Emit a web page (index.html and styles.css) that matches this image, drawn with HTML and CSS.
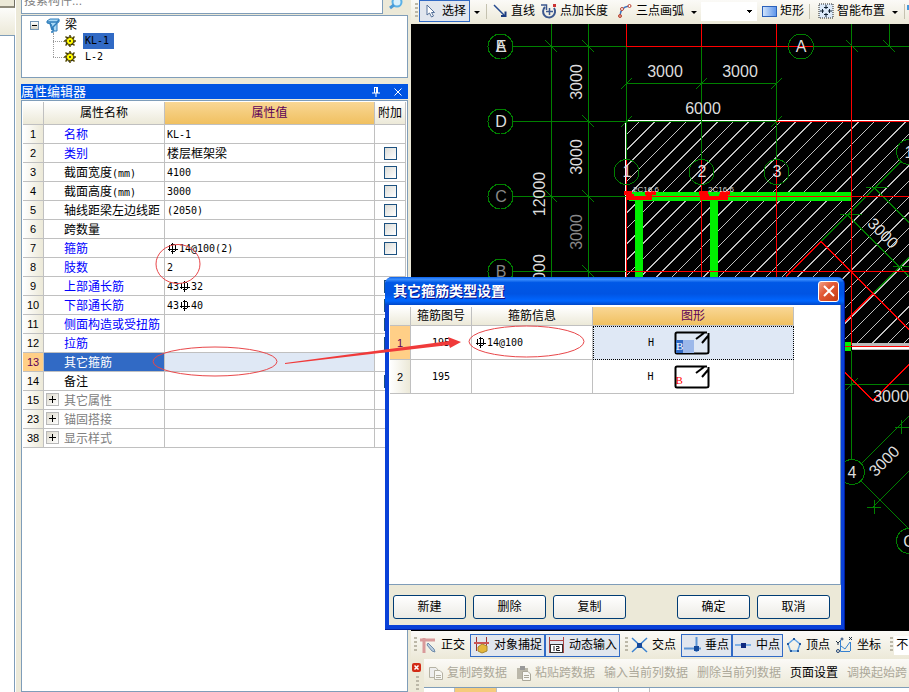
FILE: index.html
```html
<!DOCTYPE html>
<html lang="zh-CN">
<head>
<meta charset="utf-8">
<title>属性编辑器</title>
<link rel="stylesheet" href="styles.css">
</head>
<body>
<svg width="0" height="0" class="defs" aria-hidden="true">
  <symbol id="rebar" viewBox="0 0 12 11"><path d="M5.500 0V11M1 6.500H11M3.500 1.500H8M3.500 8.500H8M2.500 2V8M8.500 2V8" fill="none" stroke="#000" shape-rendering="crispEdges"/></symbol>
  <symbol id="gear" viewBox="0 0 12 12"><circle cx="6" cy="6" r="4" fill="#ffee00" stroke="#222" stroke-width="1.500" stroke-dasharray="2 1"/><path d="M6 0V3M6 9V12M0 6H3M9 6H12M1.500 1.500L4 4M8 8L10.500 10.500M10.500 1.500L8 4M1.500 10.500L4 8" stroke="#554a00" stroke-width="1.500"/><circle cx="6" cy="6" r="2.500" fill="#ff0"/><circle cx="6" cy="6" r="1" fill="#222"/></symbol>
  <symbol id="hook" viewBox="0 0 36 24"><path d="M33 1.500H3Q1.500 1.500 1.500 3V21Q1.500 22.500 3 22.500H32Q34.500 22.500 34.500 21V2M22 8L30 2M28 12L34 5" fill="none" stroke="#000" stroke-width="2"/></symbol>
</svg>
<div class="app">
  <div class="edge"><div class="edge-top"></div><div class="edge-tab"></div><div class="edge-body"></div></div>
  <aside class="side">
    <div class="search">
      <input type="text" placeholder="搜索构件..." aria-label="搜索构件">
      <button type="button" aria-label="搜索"><svg width="16" height="14" viewBox="0 0 16 14"><circle cx="9" cy="2" r="4.500" fill="#d9f0fc" stroke="#5ab0e6" stroke-width="2"/><path d="M6 5L2 8" stroke="#4a9ad6" stroke-width="3"/></svg></button>
    </div>
    <div class="tree">
      <div class="node root"><span class="minus"></span><svg width="14" height="15" viewBox="0 0 14 15"><path d="M1 3L4 1H13V4L11 5V13H8L5 6L1 5Z" fill="#a9d8f5" stroke="#2f7dbb"/><path d="M1 4H11L13 2M4 5L6 12M11 5L7 9V14H5" fill="none" stroke="#2f7dbb" stroke-width="1.500"/></svg><span class="name">梁</span></div>
      <ul>
        <li class="node"><svg width="12" height="12"><use href="#gear"/></svg><span class="code picked">KL-1</span></li>
        <li class="node"><svg width="12" height="12"><use href="#gear"/></svg><span class="code">L-2</span></li>
      </ul>
    </div>
    <div class="panel-title"><span>属性编辑器</span>
      <button type="button" aria-label="固定"><svg width="8" height="10" viewBox="0 0 8 10"><path d="M2 0.500H6M2.500 0V6M5.500 0V6M4.500 0V6M0 6H8M4 6V10" stroke="#fff" fill="none"/></svg></button>
      <button type="button" aria-label="关闭"><svg width="8" height="8" viewBox="0 0 8 8"><path d="M0.500 0.500L7.500 7.500M7.500 0.500L0.500 7.500" stroke="#fff"/></svg></button>
    </div>
    <div class="props">
      <table>
        <colgroup><col class="c-no"><col class="c-name"><col><col class="c-extra"></colgroup>
        <thead><tr><th></th><th>属性名称</th><th class="hot">属性值</th><th>附加</th></tr></thead>
        <tbody>
          <tr><th>1</th><td class="key">名称</td><td class="val">KL-1</td><td></td></tr>
          <tr><th>2</th><td class="key">类别</td><td class="val cn">楼层框架梁</td><td class="tick"><input type="checkbox" aria-label="类别"></td></tr>
          <tr><th>3</th><td class="plain">截面宽度<span class="unit">(mm)</span></td><td class="val">4100</td><td class="tick"><input type="checkbox" aria-label="截面宽度"></td></tr>
          <tr><th>4</th><td class="plain">截面高度<span class="unit">(mm)</span></td><td class="val">3000</td><td class="tick"><input type="checkbox" aria-label="截面高度"></td></tr>
          <tr><th>5</th><td class="plain">轴线距梁左边线距</td><td class="val">(2050)</td><td class="tick"><input type="checkbox" aria-label="轴线距梁左边线距"></td></tr>
          <tr><th>6</th><td class="plain">跨数量</td><td></td><td class="tick"><input type="checkbox" aria-label="跨数量"></td></tr>
          <tr><th>7</th><td class="key">箍筋</td><td class="val"><svg class="bar" width="12" height="11"><use href="#rebar"/></svg>14@100(2)</td><td class="tick"><input type="checkbox" aria-label="箍筋"></td></tr>
          <tr><th>8</th><td class="key">肢数</td><td class="val">2</td><td></td></tr>
          <tr><th>9</th><td class="key">上部通长筋</td><td class="val">43<svg class="bar" width="12" height="11"><use href="#rebar"/></svg>32</td><td class="tick"><input type="checkbox" aria-label="上部通长筋"></td></tr>
          <tr><th>10</th><td class="key">下部通长筋</td><td class="val">43<svg class="bar" width="12" height="11"><use href="#rebar"/></svg>40</td><td class="tick"><input type="checkbox" aria-label="下部通长筋"></td></tr>
          <tr><th>11</th><td class="key">侧面构造或受扭筋</td><td></td><td class="tick"><input type="checkbox" aria-label="侧面构造或受扭筋"></td></tr>
          <tr><th>12</th><td class="key">拉筋</td><td></td><td class="tick"><input type="checkbox" aria-label="拉筋"></td></tr>
          <tr class="current"><th>13</th><td class="key">其它箍筋</td><td></td><td></td></tr>
          <tr><th>14</th><td class="plain">备注</td><td></td><td class="tick"><input type="checkbox" aria-label="备注"></td></tr>
          <tr><th>15</th><td class="group"><button type="button" aria-label="展开其它属性"></button>其它属性</td><td></td><td></td></tr>
          <tr><th>23</th><td class="group"><button type="button" aria-label="展开锚固搭接"></button>锚固搭接</td><td></td><td></td></tr>
          <tr><th>38</th><td class="group"><button type="button" aria-label="展开显示样式"></button>显示样式</td><td></td><td></td></tr>
        </tbody>
      </table>
    </div>
  </aside>
  <main class="work">
    <div class="bar-top">
      <i class="grip"></i>
      <button type="button" class="tool on"><svg width="16" height="16" viewBox="0 0 16 16"><path d="M4 2V12L6.500 10L8.500 14L10.500 13L8.500 9.500H11.500Z" fill="#fff" stroke="#55719a"/></svg>选择</button>
      <i class="caret"></i><i class="sep"></i>
      <button type="button" class="tool"><svg width="16" height="16" viewBox="0 0 16 16"><path d="M2 2L13 13" stroke="#274b8f" stroke-width="1.500"/><path d="M9 13H13.500V8.500" fill="none" stroke="#1b3b80" stroke-width="2"/></svg>直线</button>
      <button type="button" class="tool"><svg width="16" height="16" viewBox="0 0 16 16"><path d="M4 4A6 6 0 1 0 13 5" fill="none" stroke="#3c588f" stroke-width="2"/><path d="M0 2H5.500V7M8.500 5V12M5 8.500H12" fill="none" stroke="#3c588f" stroke-width="1.500"/><rect x="12" y="1" width="3" height="3" fill="#c33"/></svg>点加长度</button>
      <button type="button" class="tool arc"><svg width="16" height="16" viewBox="0 0 16 16"><path d="M3 14Q3 4 12 3" fill="none" stroke="#3a73bf" stroke-width="1.500"/><circle cx="3" cy="13" r="1.500" fill="#d98" stroke="#b43"/><circle cx="5" cy="6" r="1.500" fill="#fff" stroke="#b43"/><circle cx="12.500" cy="3" r="1.500" fill="#fff" stroke="#b43"/></svg>三点画弧</button>
      <i class="caret"></i>
      <select aria-label="画弧方式"><option></option></select>
      <button type="button" class="tool"><svg width="15" height="14" viewBox="0 0 15 14"><defs><linearGradient id="rg"><stop stop-color="#d5e6fb"/><stop offset="1" stop-color="#5b93ea"/></linearGradient></defs><rect x="0.500" y="2.500" width="14" height="10" fill="url(#rg)" stroke="#2b61bb"/></svg>矩形</button>
      <i class="sep"></i>
      <button type="button" class="tool smart"><svg width="16" height="16" viewBox="0 0 16 16"><rect x="1" y="1" width="14" height="14" fill="#dceafa" stroke="#222" stroke-dasharray="1 1"/><path d="M8 2V6M6 4.500H10M8 10V14M6 11.500H10M2 8H6M4.500 6V10M10 8H14M11.500 6V10" stroke="#123"/></svg>智能布置</button>
      <i class="caret"></i><i class="sep"></i><svg width="16" height="16"><rect y="2" width="12" height="5" fill="#4499dd"/></svg>
    </div>
    <svg class="cad" role="img" aria-label="结构平面图">
      <defs><clipPath id="slab"><rect x="626" y="122" width="500" height="221"/></clipPath></defs>
      <g transform="translate(-411 -24)" fill="none" shape-rendering="crispEdges">
        <path clip-path="url(#slab)" stroke="#c0c0c0" d="M639 122l-221 221m236.670-221l-221 221m236.670-221l-221 221m236.670-221l-221 221m236.670-221l-221 221m236.670-221l-221 221m236.670-221l-221 221m236.670-221l-221 221m236.670-221l-221 221m236.670-221l-221 221m236.670-221l-221 221m236.670-221l-221 221m236.670-221l-221 221m236.670-221l-221 221m236.670-221l-221 221m236.670-221l-221 221m236.670-221l-221 221m236.670-221l-221 221m236.670-221l-221 221m236.670-221l-221 221m236.670-221l-221 221m236.670-221l-221 221m236.670-221l-221 221m236.670-221l-221 221m236.670-221l-221 221m236.670-221l-221 221m236.670-221l-221 221m236.670-221l-221 221m236.670-221l-221 221m236.670-221l-221 221m236.670-221l-221 221m236.670-221l-221 221m236.670-221l-221 221m236.670-221l-221 221"/>
        <path d="M626 120.500H1600" stroke="#fff"/><path d="M625.500 121V280" stroke="#fff"/>
        <rect x="852" y="343" width="800" height="7" fill="#bbb"/>
        <path d="M852 348H1600" stroke="#fff" stroke-width="2"/>
        <path d="M629 196.500H851" stroke="#00f000" stroke-width="9"/>
        <path d="M639 197V300M714 197V300" stroke="#00f000" stroke-width="8"/>
        <rect x="843" y="342" width="8" height="9" fill="#00f000"/>
        <g stroke="#008000">
          <path d="M551.500 24V300M588.500 24V300M513 46.500H626M813 46.500H1600M513 121.500H776M513 196.500H626M513 271.500H626M626 83.500H777M626.500 46V159M701.500 46V159M776.500 46V159M851.500 24V46M889.500 24V46M851.500 351V462M845 384.500H1600"/>
          <path d="M545 40L557 52M582 40L594 52M582 115L594 127M545 190L557 202M582 190L594 202M582 265L594 277M846 40L858 52M883 40L895 52M621 89L632 78M696 89L707 78M771 89L782 78M621 127L632 116M771 127L782 116M846 390L858 378"/>
          <path d="M901 161.500L821 241.500M874 187.500L920 233.500M847 214.500L920 287.500M920 246.500L873 293.500M866 187.500H888M840 214.500H862M893 266.500H909M861 464L920 405M861 481L920 540M873 507L920 460M895 427.500H909M901.500 420V434M867 507.500H881M874.500 500V514"/>
        </g>
        <g stroke="#f00">
          <path d="M626.500 24V46M701.500 24V46M776.500 24V46M626 46.500H813M851.500 46V345M776 121.500H1600M626.500 159V300M701.500 159V300M776.500 159V300M626 196.500H1600M626 271.500H1600M845 346.500H1600"/>
          <path d="M821 241.500L786 276.500M821 241.500L920 340.500M873 293.500L843 323.500M843 370.500L873 400.500L920 353.500"/>
          <path d="M624 192.500H632M645 192.500H656M699 192.500H708M720 192.500H730" stroke-width="4"/><path d="M627 196.500H634M646 196.500H652M700 196.500H709M719 196.500H728" stroke-width="6"/><path d="M633 198.500H646M708 198.500H720" stroke-width="3"/>
        </g>
        <g stroke="#008000">
          <circle cx="500.500" cy="46.500" r="12.500"/><circle cx="500.500" cy="121.500" r="12.500"/><circle cx="500.500" cy="196.500" r="12.500"/><circle cx="500.500" cy="271.500" r="12.500"/>
          <circle cx="801" cy="46.500" r="12.500"/><circle cx="626.500" cy="172" r="12.500"/><circle cx="701.500" cy="172" r="12.500"/><circle cx="776.500" cy="172" r="12.500"/><circle cx="909" cy="152" r="12.500"/><circle cx="852" cy="472" r="12.500" fill="#000"/><circle cx="909" cy="541" r="12.500" fill="#000"/>
        </g>
        <g class="cad-text">
          <text x="501" y="52">A</text><text x="501" y="52">E</text><text x="501" y="127">D</text><text x="501" y="202" class="dim">C</text><text x="501" y="277" class="dim">B</text>
          <text x="801" y="52">A</text><text x="627" y="177">1</text><text x="702" y="177">2</text><text x="777" y="177">3</text><text x="909" y="158">1</text><text x="852" y="478">4</text><text x="909" y="547">C</text>
          <text x="665" y="77">3000</text><text x="740" y="77">3000</text><text x="703" y="114">6000</text><text x="891" y="402">3000</text>
          <text transform="translate(582 82) rotate(-90)">3000</text><text transform="translate(582 157) rotate(-90)">3000</text><text transform="translate(582 232) rotate(-90)" class="dim">3000</text>
          <text transform="translate(545 194) rotate(-90)">12000</text><text transform="translate(545 272) rotate(-90)">3000</text>
          <text transform="translate(879 237) rotate(45)">3000</text><text transform="translate(888 465) rotate(-45)">3000</text>
          <text x="646" y="192" class="tiny">2C16.6</text><text x="721" y="192" class="tiny">2C16.6</text>
        </g>
      </g>
    </svg>
    <div class="bar-snap">
      <i class="grip"></i>
      <button type="button" class="tool"><svg width="17" height="16" viewBox="0 0 17 16"><path d="M0 3H15M4 1V16" stroke="#d99a9a" stroke-width="3"/><path d="M8 6L14 12L15 15L12 14L7 8Z" fill="#b9cde0" stroke="#6f8baa"/></svg>正交</button>
      <div class="pair first">
        <button type="button" class="tool on"><svg width="17" height="17" viewBox="0 0 17 17"><path d="M3.500 0V14M13.500 0V14" stroke="#933"/><path d="M1 6H16" stroke="#c55" stroke-width="2"/><path d="M5 10L9 7L14 9V14L9 16L5 14Z" fill="#e5b73b" stroke="#a8862e"/></svg>对象捕捉</button>
        <button type="button" class="tool on"><svg width="17" height="17" viewBox="0 0 17 17"><path d="M1.500 0V16M15.500 0V16M1 3.500H16" stroke="#a44" fill="none"/><rect x="2.500" y="7.500" width="12" height="8" fill="#fff" stroke="#333"/><path d="M6 9V14M8 9.500H11V11.500H8.500V13.500H12" fill="none" stroke="#222"/></svg>动态输入</button>
      </div>
      <i class="grip"></i>
      <button type="button" class="tool"><svg width="17" height="16" viewBox="0 0 17 16"><path d="M1 1L16 15M16 1L1 15" stroke="#3b82d0" stroke-width="1.500"/><rect x="6" y="6" width="5" height="5" fill="#154a9c"/></svg>交点</button>
      <div class="pair">
        <button type="button" class="tool on"><svg width="17" height="16" viewBox="0 0 17 16"><path d="M12.500 0V15M0 11.500H17" stroke="#5a94d6" stroke-width="2"/><rect x="10" y="9" width="5" height="5" fill="#154a9c"/></svg>垂点</button>
        <button type="button" class="tool on"><svg width="17" height="16" viewBox="0 0 17 16"><path d="M0 8H16" stroke="#7fb0e6" stroke-width="2"/><rect x="6" y="6" width="5" height="5" fill="#102a80"/></svg>中点</button>
      </div>
      <button type="button" class="tool"><svg width="16" height="16" viewBox="0 0 16 16"><path d="M8 2L14 7L11.500 14H4.500L2 7Z" fill="none" stroke="#65a5e5" stroke-width="1.500"/><path d="M7 1H9V3H7ZM1 6H3V8H1ZM13 6H15V8H13ZM4 13H6V15H4ZM11 13H13V15H11Z" fill="#23599f"/></svg>顶点</button>
      <button type="button" class="tool"><svg width="17" height="17" viewBox="0 0 17 17"><path d="M4.500 3V14.500H14M5 9L9 12L14 5M14.500 5V14" fill="none" stroke="#3681d0"/><path d="M0 4L2 6L4 4M2 6V8M13 0L16 3M16 0L13 3" stroke="#234" fill="none"/><circle cx="2" cy="14" r="1.500" fill="none" stroke="#247"/><circle cx="6" cy="2" r="1" stroke="#247" fill="none"/></svg>坐标</button>
      <i class="grip"></i><span class="offset">不</span>
    </div>
    <div class="bar-span">
      <div class="dock"><button type="button" aria-label="关闭工具栏"><svg width="9" height="9" viewBox="0 0 9 9"><rect width="9" height="9" rx="2" fill="#d22b16"/><path d="M2.500 2.500L6.500 6.500M6.500 2.500L2.500 6.500" stroke="#fff" stroke-width="1.500"/></svg></button><i class="grip"></i></div>
      <div class="span-body">
        <div class="span-tools">
          <button type="button" class="tool" disabled><svg width="16" height="15" viewBox="0 0 16 15"><path d="M1.500 1.500H8L10 4V11.500H1.500Z" fill="#eee" stroke="#b5b2a4"/><path d="M6.500 4.500H12L14.500 7V13.500H6.500ZM8 9.500H13M8 11.500H13" fill="#f7f7f3" stroke="#b5b2a4"/></svg>复制跨数据</button>
          <button type="button" class="tool" disabled><svg width="16" height="15" viewBox="0 0 16 15"><path d="M1 2H12V13H1Z" fill="#bbb8aa"/><rect x="4" width="5" height="4" fill="#999"/><path d="M6.500 5.500H12L14.500 8V14.500H6.500ZM8 9.500H13M8 11.500H13" fill="#f7f7f3" stroke="#aaa799"/></svg>粘贴跨数据</button>
          <button type="button" class="tool" disabled>输入当前列数据</button>
          <button type="button" class="tool" disabled>删除当前列数据</button>
          <button type="button" class="tool">页面设置</button>
          <button type="button" class="tool" disabled>调换起始跨</button>
        </div>
        <div class="span-grid"><i></i><i class="hot"></i><i></i><i></i></div>
      </div>
    </div>
  </main>
</div>

<section class="dialog" role="dialog" aria-labelledby="dlg-title">
  <header><h1 id="dlg-title">其它箍筋类型设置</h1><button type="button" aria-label="关闭"><svg width="12" height="12" viewBox="0 0 12 12"><path d="M1 1L11 11M11 1L1 11" stroke="#fff" stroke-width="2"/></svg></button></header>
  <div class="client">
    <div class="list">
      <table>
        <colgroup><col class="d-no"><col class="d-id"><col class="d-info"><col class="d-shape"></colgroup>
        <thead><tr><th></th><th>箍筋图号</th><th>箍筋信息</th><th class="hot">图形</th></tr></thead>
        <tbody>
          <tr class="sel"><th>1</th><td class="id">195</td><td class="info"><svg class="bar" width="12" height="11"><use href="#rebar"/></svg>14@100</td><td class="shape"><div><span>H</span><b class="stirrup"><svg width="36" height="24"><use href="#hook"/></svg><em>B</em></b></div></td></tr>
          <tr><th>2</th><td class="id">195</td><td></td><td class="shape"><div><span>H</span><b class="stirrup"><svg width="36" height="24"><use href="#hook"/></svg><em>B</em></b></div></td></tr>
        </tbody>
      </table>
    </div>
    <footer><button type="button">新建</button><button type="button">删除</button><button type="button">复制</button><button type="button" class="ok">确定</button><button type="button">取消</button></footer>
  </div>
</section>
<svg class="marks" aria-hidden="true">
  <g fill="none" stroke="#e8474a"><ellipse cx="178" cy="264" rx="22" ry="19.500"/><ellipse cx="215" cy="361.500" rx="62" ry="14.500"/><ellipse cx="526.500" cy="341.500" rx="57.500" ry="15.500"/></g>
  <path d="M285 363L449 341L448 337L461 342L450 348L449 345L285 364Z" fill="#f03a3a"/>
</svg>
</body>
</html>
```
FILE: styles.css
```css
* { box-sizing: border-box; }
body {
  margin: 0;
  background: #ece9d8;
  font: 12px/18px "Liberation Sans", "Noto Sans CJK SC", sans-serif;
  color: #000;
  overflow: hidden;
}
button { font: inherit; color: inherit; padding: 0; border: 0; background: none; }
svg { display: block; flex: none; }
.defs { position: absolute; }
.app { display: grid; grid-template-columns: 16px 387px minmax(0, 1fr); column-gap: 5px; height: 100vh; }
.app .work { margin-left: -2px; }

/* left sliver of the neighbouring panel */
.edge { display: flex; flex-direction: column; border-right: 1px solid #fff; }
.edge-top { height: 8px; border-right: 1px solid #716f64; border-bottom: 2px solid #8f8b7c; }
.edge-tab { height: 27px; background: linear-gradient(#fcfcfa, #ece9d8); }
.edge-body { flex: 1; background: #fff; border-top: 1px solid #7f9db9; border-right: 1px solid #7f9db9; }

.side { display: flex; flex-direction: column; }
.search { display: flex; height: 14px; overflow: hidden; }
.search input {
  flex: 1; min-width: 0; height: 26px; margin-top: -12px; padding: 0 2px;
  border: 1px solid #7f9db9; background: #fff; font: inherit; color: #000;
}
.search input::placeholder { color: #808080; opacity: 1; }
.search button { width: 25px; display: grid; place-items: start center; }
.tree { height: 63px; margin-top: 1px; padding: 0 8px; background: #fff; border: 1px solid #7f9db9; }
.tree ul { margin: 0 0 0 23px; padding: 0 0 0 11px; list-style: none; position: relative; }
.tree ul::before { content: ""; position: absolute; left: 0; top: 0; height: 24px; border-left: 1px dotted #999; }
.tree ul .node::before { content: ""; width: 11px; margin-left: -11px; border-top: 1px dotted #999; }
.node { display: flex; align-items: center; height: 16px; }
.root { gap: 7px; height: 17px; padding-top: 1px; }
.root .name { margin-left: -2px; }
.minus { width: 9px; height: 9px; border: 1px solid #7898b5; background: linear-gradient(#000, #000) center / 5px 1px no-repeat, linear-gradient(#fff, #d6d2c4); }
.code { margin-left: 7px; padding: 0 5px 0 2px; height: 16px; font: 10px/16px "DejaVu Sans Mono", monospace; }
.picked { background: #316ac5; }

.panel-title { display: flex; align-items: center; gap: 14px; height: 15px; margin-top: 6px; padding-right: 6px; background: #0054e3; color: #fff; font-size: 13px; line-height: 15px; }
.panel-title span { flex: 1; }
.props { flex: 1; margin-top: 1px; padding: 1px 1px 0; background: #fff; border: 1px solid #7f9db9; }

table { border-collapse: separate; border-spacing: 0; table-layout: fixed; width: 100%; }
th, td { padding: 0; border-right: 1px solid #c0c0c0; border-bottom: 1px solid #c0c0c0; white-space: nowrap; overflow: hidden; }
thead th { height: 23px; font-weight: 400; background: linear-gradient(#fff, #ece9d8); }
thead .hot { background: linear-gradient(#f9d795, #f0c060); color: #5c0057; }
tbody th { font-weight: 400; font-size: 11px; text-align: center; background: linear-gradient(90deg, #fff, #ece9d8); }
.c-no { width: 21px; }
.c-name { width: 121px; }
.c-extra { width: 31px; }
.props tbody tr { height: 19px; }
.unit, .val, .id, .info, .shape { font: 10px/18px "DejaVu Sans Mono", monospace; }
.unit { line-height: 1; }
.val.cn { font: 12px/16px "Liberation Sans", "Noto Sans CJK SC", sans-serif; }
.key, .plain, .group, .val { padding-top: 2px; line-height: 16px; }
.key, .plain { padding-left: 20px; }
.key { color: #00f; }
.val { padding-left: 2px; }
.bar { display: inline-block; vertical-align: -2px; }
.tick { text-align: center; line-height: 0; }
.tick input { appearance: none; display: block; width: 13px; height: 13px; margin: 1px auto 0; border: 1px solid #1c5180; background: linear-gradient(135deg, #dcdcd7, #fff); }
.group { color: #808080; }
.group button { display: inline-block; vertical-align: middle; width: 13px; height: 13px; margin: -2px 5px 2px 2px; border: 1px solid #b8b8b8; background: linear-gradient(#000, #000) center / 7px 1px no-repeat, linear-gradient(#000, #000) center / 1px 7px no-repeat, linear-gradient(135deg, #ddd9cc, #fff); }
.current th { background: #ffcf87; color: #5c0057; }
.current .key { background: #316ac5; color: #fff; }
.current .key + td { background: #dfe8f5; }

.work { display: flex; flex-direction: column; min-width: 0; overflow: hidden; }
.bar-top, .bar-snap, .span-tools { display: flex; align-items: center; background: linear-gradient(#fbfaf7, #ece9d8); white-space: nowrap; overflow: hidden; }
.bar-top > *, .bar-snap > *, .span-tools > * { flex: none; }
.bar-top { height: 24px; padding: 0 0 2px 4px; }
.grip { width: 3px; height: 16px; background: repeating-linear-gradient(#bcb8a8 0 2px, transparent 2px 4px); }
.tool { display: flex; align-items: center; gap: 3px; height: 22px; padding: 0 4px; }
.tool.on { padding: 0 3px; border: 1px solid #316ac5; background: #e1e6ee; }
.tool:disabled { color: #aca899; }
.bar-top .on { margin-left: 1px; }
.bar-top .tool:not(.on) { padding: 0 3px; gap: 3px; }
.bar-top .arc, .bar-top .smart { margin-left: 3px; }
.caret { width: 6px; margin: 2px 4px 0; border: 3px solid transparent; border-top-color: #000; border-bottom: 0; }
.sep { width: 1px; height: 15px; margin: 0 2px; background: #c5c2b0; }
.bar-top select { appearance: none; width: 56px; height: 19px; margin-right: 2px; padding: 0; border: 0; border-radius: 0; background: linear-gradient(#000, #000) 46px 8px / 5px 1px no-repeat, linear-gradient(#000, #000) 47px 9px / 3px 1px no-repeat, linear-gradient(#000, #000) 48px 10px / 1px 1px no-repeat, #fff; }
.cad { flex: 1; width: 100%; min-height: 0; background: #000; }
.cad-text { fill: #ddd; font-size: 16px; text-anchor: middle; shape-rendering: auto; }
.cad-text .dim { fill: #888; }
.cad-text .tiny { font-size: 8px; }

.bar-snap { height: 28px; padding-left: 3px; }
.bar-snap .tool { height: 23px; gap: 4px; padding: 0 3px; }
.bar-snap .tool.on { padding: 0 2px; }
.bar-snap .pair { display: flex; margin-left: 2px; }
.bar-snap .first + .grip { margin: 0 0 0 5px; }
.bar-snap > .grip:nth-last-child(2) { margin-left: 6px; }
.bar-snap .offset { flex: 1; height: 19px; margin-left: 1px; padding-left: 2px; background: #fff; }
.bar-span { display: flex; height: 33px; }
.dock { width: 13px; padding: 4px 0 0 1px; display: flex; flex-direction: column; gap: 4px; }
.dock .grip { margin-left: 4px; }
.span-body { flex: 1; min-width: 0; }
.span-tools { height: 28px; gap: 1px; }
.span-grid { display: flex; height: 5px; background: #fff; border-top: 1px solid #7f9db9; }
.span-grid i { width: 31px; border-right: 1px solid #c0c0c0; }
.span-grid .hot { width: 42px; background: #f5cb7b; }
.span-grid .hot + i { width: 122px; }

/* floating window */
.dialog { position: absolute; left: 385px; top: 277px; width: 460px; height: 353px; display: flex; flex-direction: column; padding: 0 3px 4px 4px; background: #0941d8; border-radius: 7px 7px 0 0; border-right: 1px solid #001ea0; border-bottom: 1px solid #001ea0; }
.dialog header { display: flex; align-items: center; justify-content: space-between; height: 28px; margin: 0 -3px 0 -4px; padding: 0 5px 0 8px; border-radius: 7px 7px 0 0; background: linear-gradient(#0a5fe8, #3c90ff 8%, #0058e6 20%, #0054e3 60%, #0066ff 85%, #0047c8); }
.dialog h1 { margin: 0; font-size: 14px; line-height: 28px; color: #fff; text-shadow: 1px 1px #0f1089; }
.dialog header button { width: 21px; height: 21px; display: grid; place-items: center; border: 1px solid #fff; border-radius: 3px; background: linear-gradient(135deg, #f0a088, #e25a38 40%, #c53a10); }
.client { flex: 1; display: flex; flex-direction: column; background: #ece9d8; }
.list { flex: 1; padding: 2px 0 0 1px; background: #fff; border-bottom: 1px solid #7f9db9; border-right: 1px solid #7f9db9; }
.list table { width: 404px; }
.d-no { width: 21px; }
.d-id { width: 61px; }
.d-info { width: 121px; }
.list thead th { height: 19px; line-height: 18px; }
.list tbody tr { height: 34px; }
.sel th { background: #ffcf87; color: #5c0057; }
.sel .shape { background: #dfe8f5; border: 1px dotted #000; }
.id { text-align: center; }
.info { padding-left: 3px; }
.shape div { display: flex; align-items: center; justify-content: center; gap: 20px; margin-left: -29px; }
.stirrup { position: relative; font-weight: 400; }
.stirrup em { position: absolute; left: 2px; top: 9px; width: 7px; font: 11px/13px "Liberation Serif", serif; color: #f00; }
.sel .stirrup em { background: #316ac5; color: #fff; box-shadow: 11px 0 #9cb8ea, 7px 0 #9cb8ea; }
.dialog footer { display: flex; gap: 7px; height: 40px; padding: 10px 11px 0 4px; }
.dialog footer button { width: 73px; height: 24px; border: 1px solid #003c74; border-radius: 3px; background: linear-gradient(#fff, #ecebe5); }
.dialog footer .ok { margin-left: auto; }
.marks { position: absolute; inset: 0; width: 100%; height: 100%; pointer-events: none; }
```
